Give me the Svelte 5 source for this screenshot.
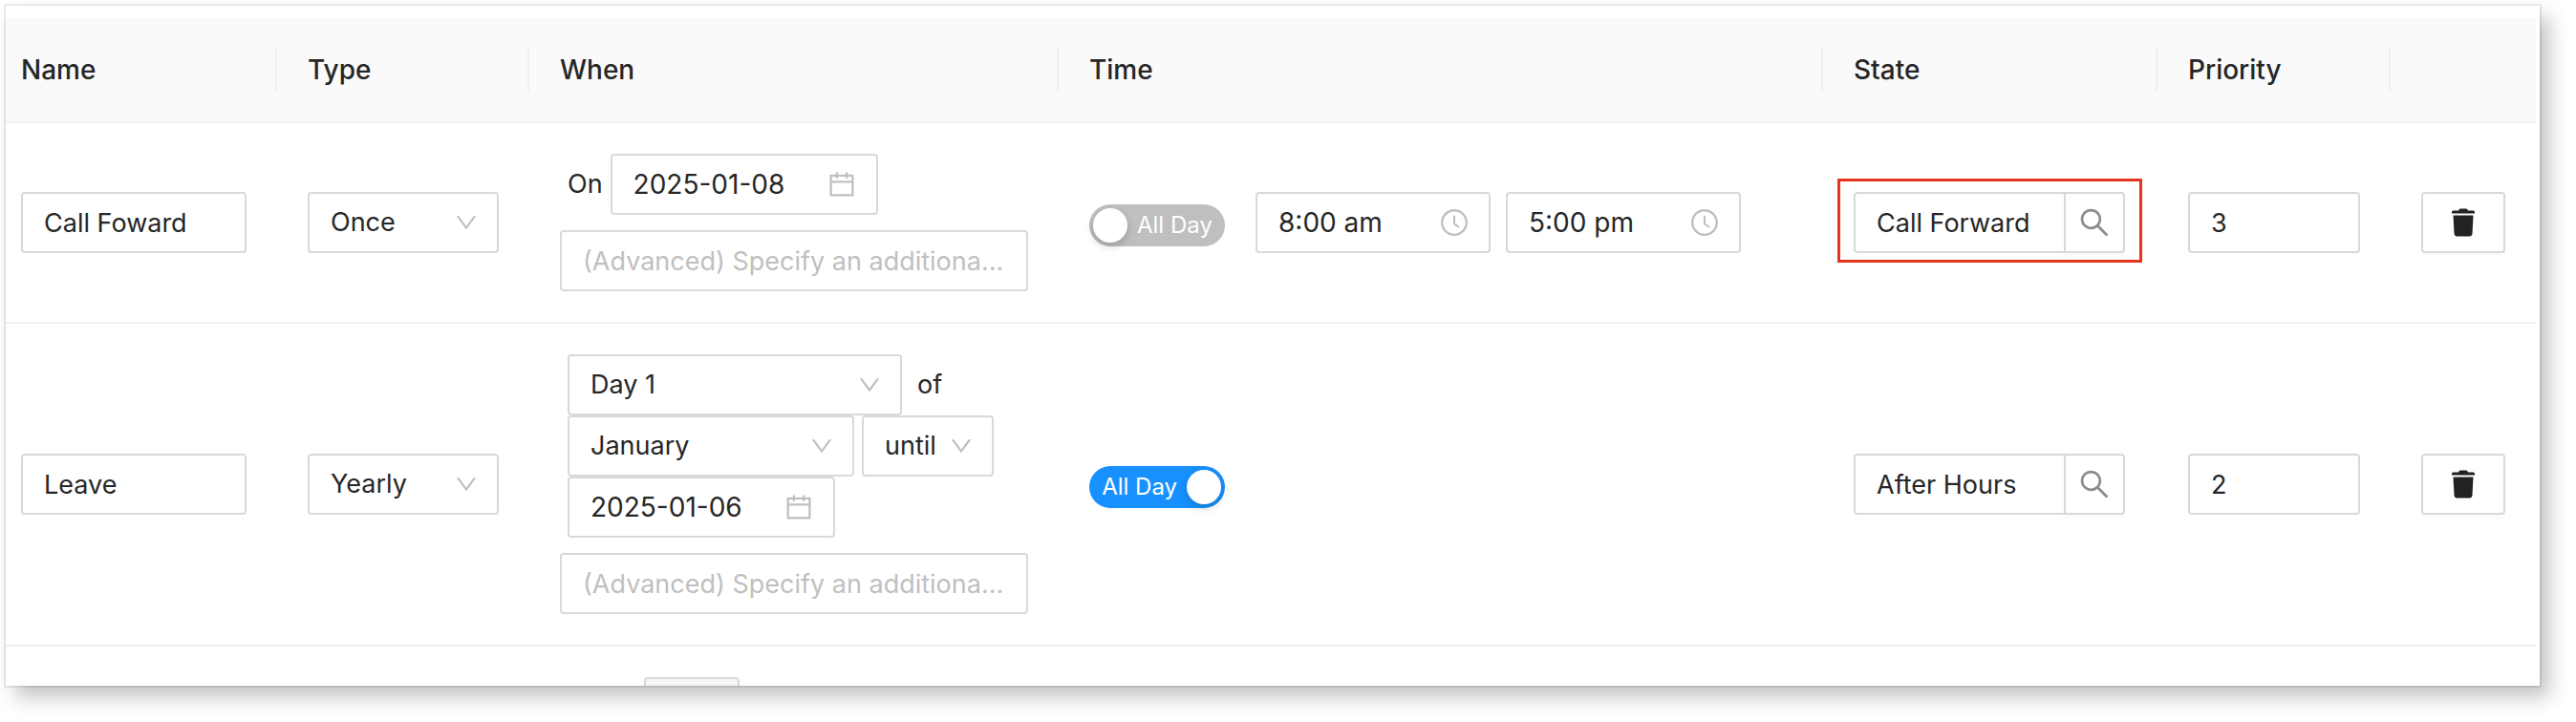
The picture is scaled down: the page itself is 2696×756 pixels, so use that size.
<script>
  const rows = [
    { id: 'r1', name: 'Call Foward', type: 'Once', allDay: false, state: 'Call Forward', priority: '3', marked: true },
    { id: 'r2', name: 'Leave', type: 'Yearly', allDay: true, state: 'After Hours', priority: '2', marked: false }
  ];
  const hint = '(Advanced) Specify an additional pattern';
</script>

{#snippet choice(label, value, options, size)}
  <span class="field {size}">
    <select aria-label={label}>
      {#each options as option}
        <option selected={option === value}>{option}</option>
      {/each}
    </select>
    <svg class="icon arrow" viewBox="64 64 896 896" aria-hidden="true">
      <path d="M884 256h-75c-5.100 0-9.900 2.500-12.900 6.600L512 654.200 227.900 262.600c-3-4.100-7.800-6.600-12.900-6.600h-75c-6.500 0-10.300 7.400-6.500 12.700l352.600 486.100c12.800 17.600 39 17.600 51.700 0l352.600-486.100c3.900-5.300.1-12.700-6.400-12.700z" />
    </svg>
  </span>
{/snippet}

{#snippet date(label, value)}
  <span class="field date">
    <input type="text" aria-label={label} {value} />
    <svg class="icon" viewBox="64 64 896 896" aria-hidden="true">
      <path d="M880 184H712v-64c0-4.400-3.600-8-8-8h-56c-4.400 0-8 3.600-8 8v64H384v-64c0-4.400-3.600-8-8-8h-56c-4.400 0-8 3.600-8 8v64H144c-17.700 0-32 14.300-32 32v664c0 17.700 14.300 32 32 32h736c17.700 0 32-14.300 32-32V216c0-17.700-14.300-32-32-32zm-40 656H184V460h656v380zM184 392V256h128v48c0 4.400 3.600 8 8 8h56c4.400 0 8-3.600 8-8v-48h256v48c0 4.400 3.600 8 8 8h56c4.400 0 8-3.600 8-8v-48h128v136H184z" />
    </svg>
  </span>
{/snippet}

{#snippet clock(label, value)}
  <span class="field time">
    <input type="text" aria-label={label} {value} />
    <svg class="icon" viewBox="64 64 896 896" aria-hidden="true">
      <path d="M512 64C264.600 64 64 264.600 64 512s200.600 448 448 448 448-200.600 448-448S759.400 64 512 64zm0 820c-205.400 0-372-166.600-372-372s166.600-372 372-372 372 166.600 372 372-166.600 372-372 372z" />
      <path d="M686.700 638.600L544.100 535.500V288c0-4.400-3.600-8-8-8H488c-4.400 0-8 3.600-8 8v275.400c0 2.600 1.200 5 3.300 6.500l165.400 120.600c3.600 2.600 8.600 1.800 11.200-1.700l28.600-39c2.600-3.700 1.800-8.700-1.800-11.200z" />
    </svg>
  </span>
{/snippet}

<main class="card">
  <table>
    <colgroup>
      <col class="c-name" /><col class="c-type" /><col class="c-when" /><col />
      <col class="c-state" /><col class="c-priority" /><col class="c-action" />
    </colgroup>
    <thead>
      <tr>
        <th scope="col">Name</th>
        <th scope="col">Type</th>
        <th scope="col">When</th>
        <th scope="col">Time</th>
        <th scope="col">State</th>
        <th scope="col">Priority</th>
        <td></td>
      </tr>
    </thead>
    <tbody>
      {#each rows as row (row.id)}
        <tr>
          <td><span class="field"><input type="text" aria-label="Name" value={row.name} /></span></td>
          <td>{@render choice('Type', row.type, ['Once', 'Weekly', 'Yearly'], 'wide')}</td>
          <td>
            <div class="when">
              {#if row.type === 'Once'}
                <div class="line"><span>On</span>{@render date('Date', '2025-01-08')}</div>
              {:else}
                <div class="lines">
                  <div class="line of">{@render choice('Day', 'Day 1', ['Day 1', 'Day 2'], 'day')}<span>of</span></div>
                  <div class="line">
                    {@render choice('Month', 'January', ['January', 'February'], 'month')}
                    {@render choice('Range', 'until', ['until', 'for'], 'range')}
                  </div>
                  <div class="line">{@render date('End date', '2025-01-06')}</div>
                </div>
              {/if}
              <span class="field"><input type="text" aria-label="Advanced pattern" placeholder={hint} /></span>
            </div>
          </td>
          <td>
            <div class="hours">
              <label class="switch">
                <input type="checkbox" checked={row.allDay} />
                <span class="knob"></span>
                <span class="caption">All Day</span>
              </label>
              {#if !row.allDay}
                <div class="span">{@render clock('Start time', '8:00 am')}{@render clock('End time', '5:00 pm')}</div>
              {/if}
            </div>
          </td>
          <td>
            <div class="lookup" class:marked={row.marked}>
              <span class="field"><input type="text" aria-label="State" value={row.state} /></span>
              <button type="button" aria-label="Find state">
                <svg viewBox="64 64 896 896" aria-hidden="true">
                  <path d="M909.600 854.500L649.900 594.800C690.200 542.700 712 479 712 412c0-80.200-31.300-155.400-87.900-212.100-56.600-56.700-132-87.900-212.100-87.900s-155.500 31.300-212.100 87.900C143.200 256.500 112 331.800 112 412c0 80.100 31.300 155.500 87.900 212.100C256.500 680.800 331.800 712 412 712c67 0 130.600-21.800 182.700-62l259.700 259.600a8.200 8.200 0 0 0 11.600 0l43.600-43.500a8.200 8.200 0 0 0 0-11.600zM570.400 570.400C528 612.700 471.800 636 412 636s-116-23.300-158.400-65.600C211.300 528 188 471.800 188 412s23.300-116.100 65.600-158.400C296 211.300 352.200 188 412 188s116.100 23.200 158.400 65.600S636 352.200 636 412s-23.300 116.100-65.600 158.400z" />
                </svg>
              </button>
            </div>
          </td>
          <td><span class="field"><input type="text" aria-label="Priority" value={row.priority} /></span></td>
          <td>
            <button type="button" class="remove" aria-label="Delete">
              <svg viewBox="0 0 28 30" aria-hidden="true">
                <path d="M9 2.500 Q9.500 0.500 11 0.500 H17 Q18.500 0.500 19 2.500 H24.500 Q26 2.500 26 4 V5.500 H2 V4 Q2 2.500 3.500 2.500 Z M3.500 7.500 H24.500 L23.500 26.500 Q23.200 29.500 20.500 29.500 H7.500 Q4.800 29.500 4.500 26.500 Z" />
              </svg>
            </button>
          </td>
        </tr>
      {/each}
      <tr class="next">
        <td></td>
        <td></td>
        <td><div class="peek"><button type="button" disabled aria-label="Days"></button></div></td>
        <td></td>
        <td></td>
        <td></td>
        <td></td>
      </tr>
    </tbody>
  </table>
</main>

<style>
  :global(body) {
    background: #fff;
    overflow: hidden;
  }

  #app,
  .card {
    margin: 6px 38px 38px 6px;
    padding: 13px 4px 0 0;
    outline: 2px solid rgba(0, 0, 0, 0.08);
    background: #fff;
    box-shadow: 10px 12px 20px rgba(0, 0, 0, 0.24);
    color: #262626;
    font: 28px/44px Inter, Roboto, sans-serif;
  }

  table {
    width: 100%;
    table-layout: fixed;
    border-collapse: separate;
    border-spacing: 0;
  }

  .c-name { width: 284px; }
  .c-type { width: 264px; }
  .c-when { width: 554px; }
  .c-state { width: 350px; }
  .c-priority { width: 244px; }
  .c-action { width: 152px; }

  th,
  td {
    padding: 32px;
    border-bottom: 2px solid #f0f0f0;
    text-align: left;
    vertical-align: middle;
  }

  tr > :first-child { padding-left: 16px; }

  thead tr > * {
    background: #fafafa;
    font-weight: 500;
  }

  thead th {
    background: linear-gradient(#f0f0f0, #f0f0f0) right center / 2px 46px no-repeat #fafafa;
  }

  .field {
    display: flex;
    align-items: center;
    box-sizing: border-box;
    height: 64px;
    border: 2px solid #d9d9d9;
    border-radius: 4px;
    background: #fff;
    font-size: 27px;
    position: relative;
  }

  .field input,
  .field select {
    box-sizing: border-box;
    width: 100%;
    height: 100%;
    padding: 0 22px;
    border: 0;
    outline: 0;
    background: transparent;
    color: inherit;
    font: inherit;
    text-overflow: ellipsis;
    appearance: none;
  }

  .field input::placeholder {
    color: #bfbfbf;
    opacity: 1;
    text-overflow: ellipsis;
  }

  .icon {
    position: absolute;
    right: 22px;
    width: 28px;
    height: 28px;
    fill: #bfbfbf;
    pointer-events: none;
  }

  .icon.arrow {
    right: 20px;
    width: 24px;
    height: 24px;
  }

  .date,
  .time { font-size: 28px; }

  .date { width: 280px; }
  .time { width: 246px; }
  .day { width: 350px; }
  .month { width: 300px; }
  .range { width: 138px; }

  .when {
    display: flex;
    flex-direction: column;
    gap: 16px;
  }

  .line {
    display: flex;
    align-items: center;
    gap: 8px;
    padding-left: 8px;
    font-size: 27px;
  }

  .line.of { gap: 16px; }

  .hours {
    display: flex;
    align-items: center;
    gap: 32px;
  }

  .span {
    display: flex;
    gap: 16px;
  }

  .switch {
    display: flex;
    align-items: center;
    gap: 10px;
    box-sizing: border-box;
    width: 142px;
    height: 44px;
    margin-top: 6px;
    padding: 0 4px;
    border-radius: 22px;
    background: #bfbfbf;
    color: #fff;
    font-size: 24px;
    white-space: nowrap;
  }

  .switch:has(:checked) {
    flex-direction: row-reverse;
    background: #1890ff;
  }

  .switch input {
    position: absolute;
    opacity: 0;
  }

  .knob {
    flex: none;
    width: 36px;
    height: 36px;
    border-radius: 50%;
    background: #fff;
    box-shadow: 0 4px 8px rgba(0, 35, 11, 0.2);
  }

  .lookup {
    display: flex;
    position: relative;
    max-width: 284px;
  }

  .lookup .field {
    flex: 1;
    border-right: 0;
    border-radius: 4px 0 0 4px;
  }

  .lookup.marked::after {
    content: '';
    position: absolute;
    inset: -14px -18px -10px -17px;
    border: 3px solid #e5351f;
    pointer-events: none;
  }

  button {
    display: flex;
    align-items: center;
    justify-content: center;
    box-sizing: border-box;
    width: 64px;
    height: 64px;
    padding: 0;
    border: 2px solid #d9d9d9;
    border-radius: 0 4px 4px 0;
    background: #fff;
    box-shadow: 0 4px 0 rgba(0, 0, 0, 0.016);
  }

  button svg {
    width: 32px;
    height: 32px;
    fill: #8c8c8c;
  }

  .remove {
    width: 88px;
    border-radius: 4px;
  }

  .remove svg {
    width: 28px;
    height: 30px;
    fill: #222;
  }

  .next td {
    padding-bottom: 0;
    border-bottom: 0;
  }

  .peek {
    height: 9px;
    padding-left: 88px;
    overflow: hidden;
  }

  .peek button {
    width: 100px;
    border-radius: 4px;
    background: #f5f5f5;
  }
</style>
